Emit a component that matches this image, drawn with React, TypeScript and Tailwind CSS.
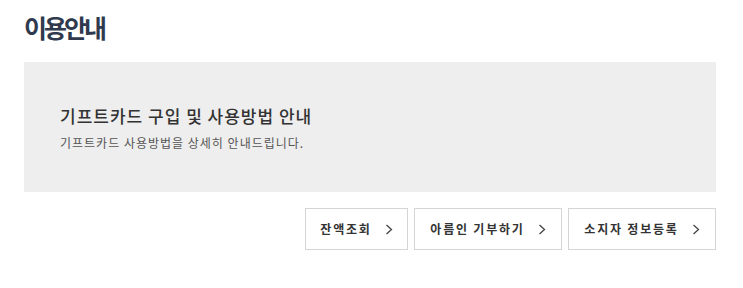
const font = { fontFamily: '"Noto Sans CJK KR", "Noto Sans", sans-serif' }

const Chevron = () => (
	<svg width="8" height="11" viewBox="0 0 8 11" fill="none" className="shrink-0">
		<polyline points="1.5,1 6.5,5.5 1.5,10" stroke="#444" strokeWidth="1.3" />
	</svg>
)

const links = [
	{ label: "잔액조회", width: "w-[103px]" },
	{ label: "아름인 기부하기", width: "w-[148px]" },
	{ label: "소지자 정보등록", width: "w-[148px]" },
]

export default function App() {
	return (
		<div className="w-[743px] h-[288px] bg-white pl-[24px] pr-[27px] pt-[9px]" style={font}>
			<h1 className="text-[25px] leading-[36px] font-bold text-[#2f3a4e] tracking-[-3px]">이용안내</h1>

			{/* gray guide box */}
			<div className="mt-[17px] h-[130px] bg-[#eeeeee] pl-[36px] pt-[42px]">
				<h2 className="text-[17px] leading-[24px] font-medium text-[#333] tracking-[1px]">
					기프트카드 구입 및 사용방법 안내
				</h2>
				<p className="mt-[7px] text-[12px] leading-[16px] text-[#555] tracking-[1px]">
					기프트카드 사용방법을 상세히 안내드립니다.
				</p>
			</div>

			<div className="mt-[16px] flex justify-end gap-[6px]">
				{links.map((l) => (
					<button
						key={l.label}
						className={`${l.width} h-[42px] border border-[#d5d5d5] bg-white flex items-center justify-center gap-[13px]`}
					>
						<span className="text-[12px] font-bold text-[#333] tracking-[1.8px]">{l.label}</span>
						<Chevron />
					</button>
				))}
			</div>
		</div>
	)
}
